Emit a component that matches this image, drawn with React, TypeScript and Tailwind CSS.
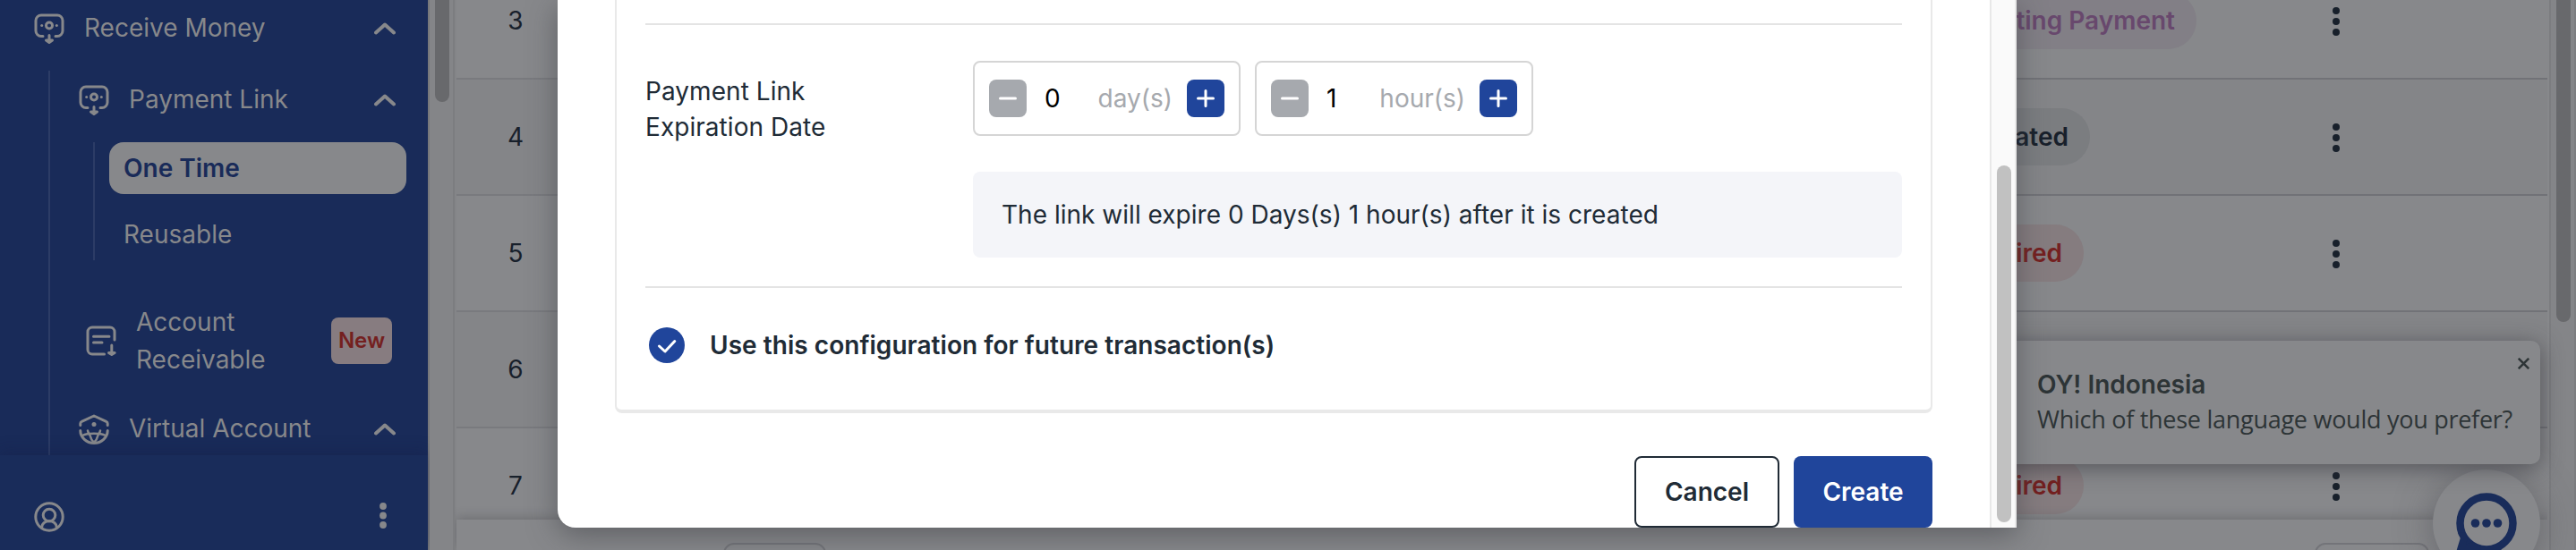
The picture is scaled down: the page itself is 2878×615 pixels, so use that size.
import type { ReactNode } from "react";

function ReceiveIcon() {
  return (
    <svg className="h-[34px] w-[34px] shrink-0" viewBox="0 0 34 34" fill="none" stroke="#87888b" strokeWidth="3" strokeLinecap="round" strokeLinejoin="round">
      <path d="M10 25.5H8a6 6 0 0 1-6-6V8a6 6 0 0 1 6-6h18a6 6 0 0 1 6 6v11.500a6 6 0 0 1-6 6h-2" />
      <circle cx="17" cy="13.500" r="3.500" />
      <path d="M17 24.500v7M13.500 30l3.500 2.500 3.500-2.500z" />
      <circle cx="8.700" cy="13.500" r="1.500" fill="#87888b" stroke="none" />
      <circle cx="25.300" cy="13.500" r="1.500" fill="#87888b" stroke="none" />
    </svg>
  );
}

function InvoiceIcon() {
  return (
    <svg className="h-[34px] w-[34px] shrink-0" viewBox="0 0 34 34" fill="none" stroke="#87888b" strokeWidth="3" strokeLinecap="round" strokeLinejoin="round">
      <path d="M20.500 32H7a5 5 0 0 1-5-5V7a5 5 0 0 1 5-5h20a5 5 0 0 1 5 5v9M8.500 12.200H26M8.500 19h9.500M28.800 22v9M25.500 30.500l3.300 2 3.300-2z" />
    </svg>
  );
}

function VirtualIcon() {
  return (
    <svg className="h-[34px] w-[34px] shrink-0" viewBox="0 0 34 34" fill="none" stroke="#87888b" strokeWidth="3" strokeLinecap="round" strokeLinejoin="round">
      <path d="M1.800 12.500v-1.800c0-1 .5-1.900 1.500-2.300L17 2l13.700 6.400c1 .4 1.500 1.300 1.500 2.300v1.800" />
      <path d="M1.800 18.500a15.200 14 0 0 0 30.400 0" />
      <path d="M4 24c3-1.500 7-2.200 13-2.200s10 .7 13 2.200M10 18.500c.4 2.500 2 4 2.600 5.500.8 3.500 2.400 6 4.400 8 2-2 3.600-4.500 4.400-8 .6-1.500 2.200-3 2.600-5.500" strokeWidth="2.500" />
      <circle cx="17" cy="11.500" r="2.500" fill="#87888b" stroke="none" />
    </svg>
  );
}

function UserIcon() {
  return (
    <svg className="h-[34px] w-[34px]" viewBox="0 0 34 34" fill="none" stroke="#87888b" strokeWidth="3">
      <circle cx="17" cy="17" r="15.200" />
      <circle cx="17" cy="15" r="6.800" />
      <path d="M8.500 29c.6-4.500 3.500-7.200 8.500-7.200s7.900 2.700 8.500 7.200" />
    </svg>
  );
}

function Chevron() {
  return (
    <svg className="ml-auto h-[14px] w-[24px] shrink-0" viewBox="0 0 24 14" fill="none" stroke="#87888b" strokeWidth="4" strokeLinecap="round" strokeLinejoin="round">
      <path d="M2 11.500L12 2.500l10 9" />
    </svg>
  );
}

function Sidebar() {
  return (
    <aside className="flex h-full w-[480px] shrink-0 flex-col border-r-2 border-[#77787b] bg-[#192b59] text-[28px] leading-[42px] text-[#87888b]">
      <div className="flex h-[509px] flex-col overflow-hidden">
        <div className="flex h-[79px] shrink-0 items-start pr-9 pl-[38px] pt-[11px]">
          <div className="flex h-[42px] w-full items-center">
            <ReceiveIcon />
            <span className="-mt-[2px] ml-[22px]">Receive Money</span>
            <Chevron />
          </div>
        </div>
        <div className="ml-[54px] flex h-[430px] shrink-0 flex-col border-l-2 border-[#2c3c66]">
          <div className="flex h-[66px] items-center pr-9 pl-8">
            <ReceiveIcon />
            <span className="-mt-[2px] ml-[22px]">Payment Link</span>
            <Chevron />
          </div>
          <div className="mt-[14px] ml-12 flex h-[132px] flex-col border-l-2 border-[#2c3c66] pl-4 pr-6">
            <div className="flex h-[58px] items-center rounded-[16px] bg-[#87888b] pl-[16px] font-semibold text-[#192b59]">One Time</div>
            <div className="mt-4 flex h-[58px] items-center pl-[16px]">Reusable</div>
          </div>
          <div className="mt-[48px] flex h-[84px] items-center pl-10">
            <InvoiceIcon />
            <span className="ml-[22px] w-[180px]">Account Receivable</span>
            <span className="ml-[38px] flex h-[52px] w-[68px] items-center justify-center rounded-lg bg-[#877c80] text-[24px] font-semibold text-[#74201f]">New</span>
          </div>
          <div className="mt-[36px] flex h-[42px] items-center pr-9 pl-8">
            <VirtualIcon />
            <span className="-mt-[2px] ml-[22px]">Virtual Account</span>
            <Chevron />
          </div>
        </div>
      </div>
      <div className="flex flex-1 items-start bg-[#192c5a] pr-[46px] pl-[38px] pt-[52px] shadow-[0_-4px_16px_rgba(20,28,70,0.35)]">
        <UserIcon />
        <svg className="mt-[1px] ml-auto h-[30px] w-2" viewBox="0 0 8 30" fill="#87888b">
          <circle cx="4" cy="4" r="3.900" />
          <circle cx="4" cy="14.500" r="3.900" />
          <circle cx="4" cy="25" r="3.900" />
        </svg>
      </div>
    </aside>
  );
}

function RowDots() {
  return (
    <svg className="h-8 w-2 shrink-0" viewBox="0 0 8 32" fill="#18202b">
      <circle cx="4" cy="4" r="4" />
      <circle cx="4" cy="16" r="4" />
      <circle cx="4" cy="28" r="4" />
    </svg>
  );
}

type Row = { no: number; status?: string; pill?: string; bg: string };

const rows: Row[] = [
  { no: 3, status: "Waiting Payment", pill: "mr-[152px] bg-[#827f86] text-[#68486d]", bg: "bg-[#87888b]" },
  { no: 4, status: "Created", pill: "mr-[271px] bg-[#7b7d80] text-[#18202b]", bg: "bg-[#848588]" },
  { no: 5, status: "Expired", pill: "mr-[278px] bg-[#857c7f] text-[#74201f]", bg: "bg-[#87888b]" },
  { no: 6, bg: "bg-[#848588]" },
  { no: 7, status: "Expired", pill: "mr-[278px] bg-[#857c7f] text-[#74201f]", bg: "bg-[#87888b]" },
];

function TableRow({ row }: { row: Row }) {
  return (
    <div className={`flex h-[130px] shrink-0 ${row.bg}`}>
      <div className="flex w-[132px] items-center justify-center border-b-2 border-[#797a7e] text-[28px] leading-[42px] text-[#18202b]">
        {row.no}
      </div>
      <div className="flex flex-1 items-center justify-end border-b-2 border-[#717277]">
        {row.status && (
          <span className={`flex h-16 items-center rounded-full px-6 text-[28px] font-semibold ${row.pill}`}>{row.status}</span>
        )}
        <span className="mt-[2px] mr-[232px] flex">
          <RowDots />
        </span>
      </div>
    </div>
  );
}

function Main() {
  return (
    <main className="flex min-w-0 flex-1 bg-[#848588]">
      <div className="flex w-[28px] justify-center border-r-2 border-[#7c7d80] pl-[2px]">
        <div className="h-[114px] w-4 rounded-b-full bg-[#68696c]" />
      </div>
      <div className="flex flex-1 flex-col overflow-hidden border-r-2 border-[#87888b] pl-[2px]">
        <div className="flex h-[581px] shrink-0 flex-col overflow-hidden">
          <div className="-mt-[41px] flex flex-col">
            {rows.map((row) => (
              <TableRow key={row.no} row={row} />
            ))}
          </div>
        </div>
        <div className="flex flex-1 justify-between overflow-hidden bg-[#87888b] pt-[26px] pr-[132px] pl-[298px] shadow-[0_-2px_12px_rgba(60,60,66,0.35)]">
          <div className="h-[60px] w-[115px] rounded-xl border-2 border-[#737479]" />
          <div className="h-[60px] w-[128px] rounded-xl border-2 border-[#737479]" />
        </div>
      </div>
      <div className="flex w-[30px] justify-center border-x-2 border-[#7c7d80] bg-[#848588] pl-[2px]">
        <div className="h-[360px] w-4 rounded-b-full bg-[#68696c]" />
      </div>
    </main>
  );
}

function StepButton({ sign, active }: { sign: "minus" | "plus"; active: boolean }) {
  return (
    <button className={`flex h-[42px] w-[42px] shrink-0 items-center justify-center rounded-lg ${active ? "bg-[#20459b]" : "bg-[#a6a9ae]"}`}>
      <svg className="h-5 w-5" viewBox="0 0 20 20" stroke="#fff" strokeWidth="3" strokeLinecap="round">
        <path d={sign === "plus" ? "M1.500 10h17M10 1.500v17" : "M1.500 10h17"} />
      </svg>
    </button>
  );
}

function Stepper({ value, unit, width }: { value: string; unit: string; width: string }) {
  return (
    <div className={`flex h-[84px] items-center rounded-lg border-2 border-[#d5d5d5] px-4 ${width}`}>
      <StepButton sign="minus" active={false} />
      <span className="ml-[20px] text-[28px] text-black">{value}</span>
      <span className="mr-[16px] ml-auto text-[28px] text-[#a6a9ae]">{unit}</span>
      <StepButton sign="plus" active />
    </div>
  );
}

function Divider() {
  return <div className="h-[2px] shrink-0 bg-[#e4e4e4]" />;
}

function Field({ label, children }: { label: ReactNode; children: ReactNode }) {
  return (
    <div className="flex h-[292px] pt-10">
      <div className="w-[366px] pt-[14px] text-[28px] leading-10 tracking-[0.05px]">{label}</div>
      <div className="flex flex-1 flex-col gap-10">{children}</div>
    </div>
  );
}

function Modal() {
  return (
    <div className="absolute top-0 left-[623px] flex h-[590px] w-[1630px] overflow-hidden rounded-bl-[20px] bg-white text-[#202b36] shadow-[0_8px_32px_rgba(60,62,68,0.55)]">
      <div className="flex w-[1600px] flex-col pr-[64px] pl-[64px]">
        <div className="flex h-[462px] shrink-0 flex-col rounded-b-lg border-x-2 border-b-4 border-[#e9e9e9] px-8 pt-[26px]">
          <Divider />
          <Field
            label={
              <>
                Payment Link
                <br />
                Expiration Date
              </>
            }
          >
            <div className="flex gap-4">
              <Stepper value="0" unit="day(s)" width="w-[299px]" />
              <Stepper value="1" unit="hour(s)" width="w-[311px]" />
            </div>
            <div className="flex h-24 items-center rounded-lg bg-[#f4f5f9] pl-[32px] text-[28px] tracking-[0.02px]">
              The link will expire 0 Days(s) 1 hour(s) after it is created
            </div>
          </Field>
          <Divider />
          <div className="flex pt-11 pl-1">
            <div className="flex h-10 items-center">
              <svg className="h-10 w-10" viewBox="0 0 40 40">
                <circle cx="20" cy="20" r="20" fill="#20459b" />
                <path d="M11.500 21l6.500 6L28.800 15.500" fill="none" stroke="#fff" strokeWidth="3" strokeLinecap="round" strokeLinejoin="round" />
              </svg>
              <span className="ml-7 text-[28px] font-semibold tracking-[0.04px]">Use this configuration for future transaction(s)</span>
            </div>
          </div>
        </div>
        <div className="mt-12 flex justify-end gap-4 text-[28px] font-semibold">
          <button className="h-20 w-[162px] rounded-lg border-2 border-[#202b36]">Cancel</button>
          <button className="h-20 w-[155px] rounded-lg bg-[#20459b] text-white">Create</button>
        </div>
      </div>
      <div className="flex w-[30px] flex-col items-center border-x-2 border-[#e8e8e8] bg-[#fafafa] pt-[185px] pl-[2px]">
        <div className="h-[399px] w-4 rounded-full bg-[#c1c1c1]" />
      </div>
    </div>
  );
}

function ChatWidget() {
  return (
    <>
      <div className="absolute top-[525px] left-[2718px] flex h-[120px] w-[120px] justify-center rounded-full bg-[#87888b] shadow-[0_4px_40px_rgba(70,70,76,0.5)]">
        <svg className="mt-[26px] h-[70px] w-[70px]" viewBox="0 0 70 70" fill="#192c5a">
          <circle cx="35" cy="34" r="29.500" fill="none" stroke="#192c5a" strokeWidth="8.500" />
          <path d="M3 45l3.300 4L.5 68H26l3-7-9-6-7.700 2.500L14 49l-3-5z" />
          <circle cx="22.500" cy="34" r="4.800" />
          <circle cx="35" cy="34" r="4.800" />
          <circle cx="47.500" cy="34" r="4.800" />
        </svg>
      </div>
      <div className="absolute top-[381px] left-[2200px] flex h-[138px] w-[638px] flex-col rounded-[10px] bg-[#87888b] pl-[76px] pt-[29px] text-[#2d3436] shadow-[0_4px_24px_rgba(50,50,56,0.6)]">
        <span className="text-[28px] leading-10 font-semibold">OY! Indonesia</span>
        <span className="font-['Open_Sans',sans-serif] text-[27px] leading-[38px] tracking-[-0.27px] whitespace-nowrap">Which of these language would you prefer?</span>
        <svg className="absolute top-[19px] right-3 h-[13px] w-[13px]" viewBox="0 0 13 13" stroke="#2d3436" strokeWidth="2.500">
          <path d="M.8.800l11.400 11.400M12.200.800L.8 12.200" />
        </svg>
      </div>
    </>
  );
}

export default function App() {
  return (
    <div className="relative flex h-[615px] w-[2878px] overflow-hidden bg-[#87888b] font-['Inter',sans-serif]">
      <Sidebar />
      <Main />
      <ChatWidget />
      <Modal />
    </div>
  );
}
